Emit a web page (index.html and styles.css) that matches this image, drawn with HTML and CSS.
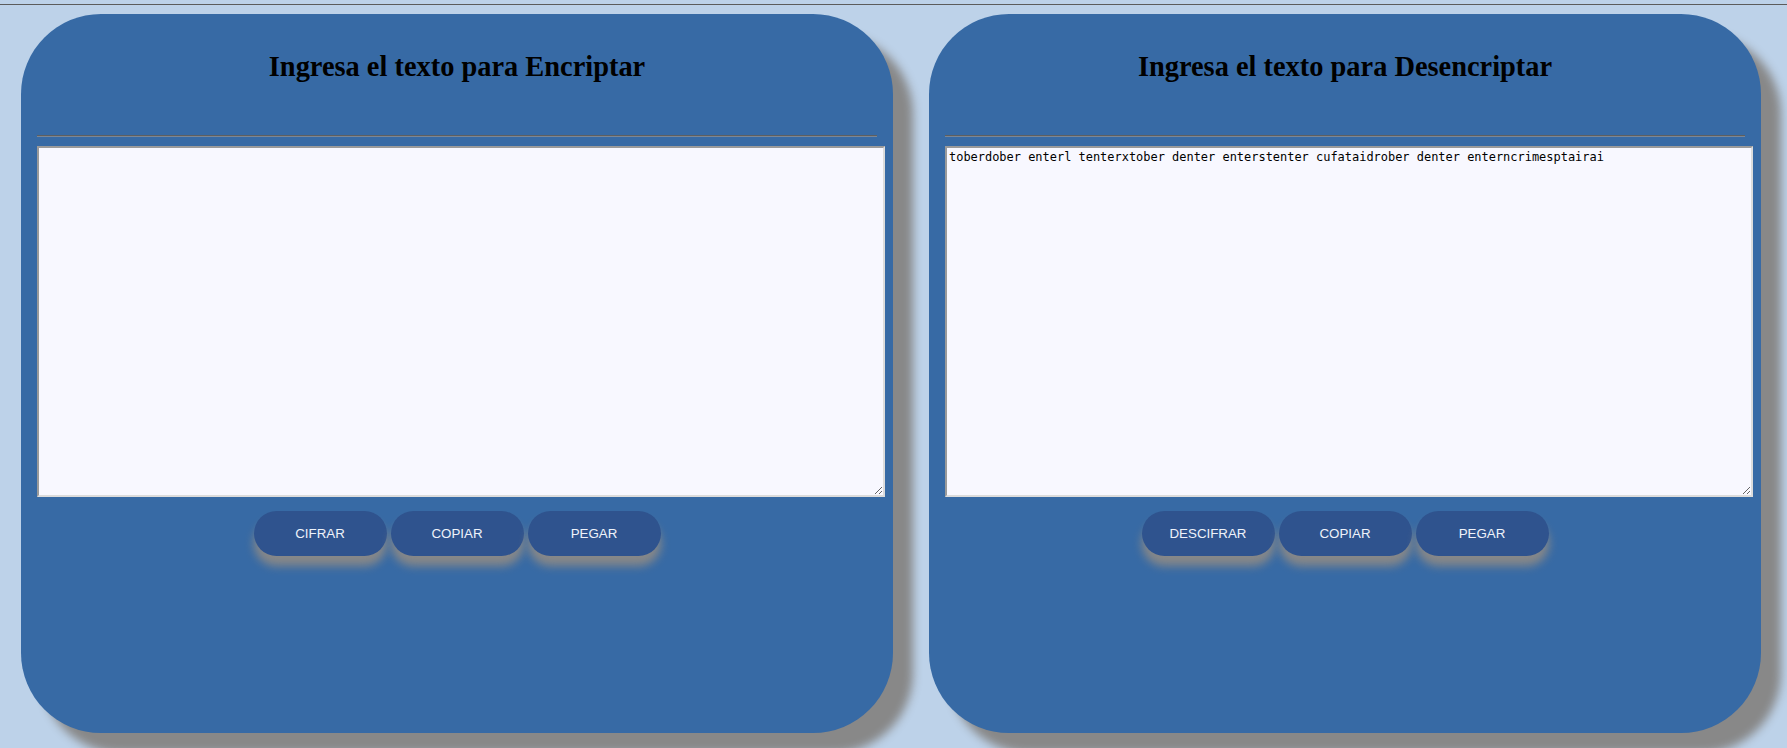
FILE: index.html
```html
<!DOCTYPE html>
<html lang="es">
<head>
<meta charset="utf-8">
<title>Encriptador</title>
<link rel="stylesheet" href="styles.css">
</head>
<body>
<div class="topbar"></div>
<main class="page">
  <section class="card card--encrypt">
    <h2 class="card__title">Ingresa el texto para Encriptar</h2>
    <hr class="card__rule">
    <textarea class="card__text"></textarea>
    <div class="actions">
      <button class="btn">CIFRAR</button>
      <button class="btn">COPIAR</button>
      <button class="btn">PEGAR</button>
    </div>
  </section>
  <section class="card card--decrypt">
    <h2 class="card__title">Ingresa el texto para Desencriptar</h2>
    <hr class="card__rule">
    <textarea class="card__text">toberdober enterl tenterxtober denter enterstenter cufataidrober denter enterncrimesptairai</textarea>
    <div class="actions">
      <button class="btn">DESCIFRAR</button>
      <button class="btn">COPIAR</button>
      <button class="btn">PEGAR</button>
    </div>
  </section>
</main>
</body>
</html>
```
FILE: styles.css
```css
html, body {
  margin: 0;
  padding: 0;
}
body {
  background: #bdd2e9;
  font-family: "Liberation Serif", serif;
  overflow: hidden;
  height: 748px;
}
.topbar {
  height: 4px;
  border-bottom: 1px solid #5c5c5c;
}
.page {
  display: flex;
  gap: 36px;
  padding: 9px 0 0 21px;
}
.card {
  box-sizing: border-box;
  height: 719px;
  padding: 0 16px;
  border-radius: 80px;
  background: #376aa5;
  box-shadow: 20px 20px 10px #888888;
  display: flex;
  flex-direction: column;
}
.card--encrypt {
  width: 872px;
}
.card--decrypt {
  width: 832px;
}
.card__title {
  margin: 37px 0 0;
  text-align: center;
  font: 700 28.4px/32px "Liberation Serif", serif;
  color: #000;
}
.card__rule {
  margin: 52px 0 9px;
  height: 0;
  border: 0;
  border-top: 1px solid #5f5f5f;
  border-bottom: 1px solid #7b8796;
}
.card__text {
  display: block;
  box-sizing: content-box;
  width: 100%;
  height: 343px;
  margin: 0;
  padding: 2px;
  border: 2px solid;
  border-color: #9a9a9a #dcdcdc #dcdcdc #9a9a9a;
  background: #f8f8ff;
  font: 11.96px/14px "DejaVu Sans Mono", monospace;
  color: #000;
}
.actions {
  display: flex;
  justify-content: center;
  gap: 4px;
  margin-top: 14px;
}
.btn {
  width: 133px;
  height: 45px;
  border: 0;
  border-radius: 23px;
  background: #2f538e;
  color: #eef2fa;
  font: 13.33px "Liberation Sans", Arial, sans-serif;
  box-shadow: 0 10px 10px #888888;
  padding: 0;
}
```
